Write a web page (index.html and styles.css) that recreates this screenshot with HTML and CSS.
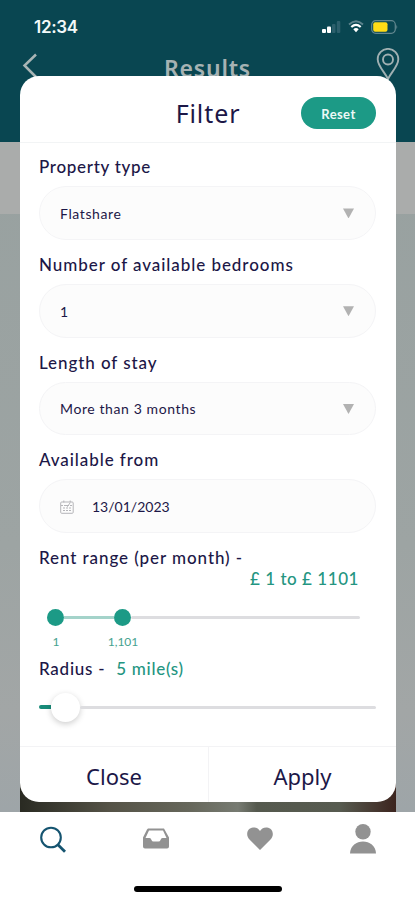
FILE: index.html
```html
<!DOCTYPE html>
<html lang="en">
<head>
<meta charset="utf-8">
<title>Filter</title>
<link rel="stylesheet" href="styles.css">
</head>
<body>
<div class="phone">
  <header class="top">
    <div class="status">
      <span class="time">12:34</span>
      <div class="status-icons">
        <svg width="19" height="14" viewBox="0 0 19 14"><rect x="0" y="9" width="4" height="4" rx="1" fill="#fff"/><rect x="5" y="6.500" width="4" height="6.500" rx="1" fill="#fff"/><rect x="10" y="4" width="3.500" height="9" rx="1" fill="#2c5f6c"/><rect x="14.800" y="1" width="3.500" height="12" rx="1" fill="#2c5f6c"/></svg>
        <svg width="16" height="14" viewBox="0 0 16 14" fill="none"><path d="M1 4.500Q8-2 15 4.500" stroke="#5d838d" stroke-width="1.800"/><path d="M3.300 7Q8 2.800 12.700 7" stroke="#fff" stroke-width="2.200"/><path d="M5.300 9.200Q8 7 10.700 9.200L8 12.300Z" fill="#fff"/></svg>
        <svg width="27" height="14" viewBox="0 0 27 14"><rect x="0.700" y="0.700" width="23.600" height="12.600" rx="4" fill="none" stroke="#638890" stroke-width="1.200"/><rect x="2.200" y="2.200" width="14.300" height="9.600" rx="2" fill="#ffdc16"/><path d="M25.500 4.500q1.500 2.500 0 5z" fill="#7b999f"/></svg>
      </div>
    </div>
    <div class="nav">
      <svg class="back" width="16" height="26" viewBox="0 0 16 26"><path d="M14 1.500L2.500 12.500L14 24" fill="none" stroke="#a9b5b5" stroke-width="2.500"/></svg>
      <span class="nav-title">Results</span>
      <svg class="pin" width="24" height="32" viewBox="0 0 24 32" fill="none" stroke="#a0b0b2" stroke-width="1.900"><path d="M12 31C9 24.500 1.700 18 1.700 11.200a10.300 10.300 0 0 1 20.600 0C22.300 18 15 24.500 12 31Z"/><circle cx="12" cy="11.500" r="5"/></svg>
    </div>
  </header>
  <main class="results">
    <div class="results-bar"></div>
    <div class="listing"></div>
    <div class="photo"></div>
  </main>
  <nav class="tabs">
    <svg width="28" height="28" viewBox="0 0 28 28" fill="none" stroke="#155470"><circle cx="12" cy="11.500" r="9.800" stroke-width="2.100"/><path d="M18.700 18.500L26 25.800" stroke-width="2.800"/></svg>
    <svg width="28" height="28" viewBox="0 0 28 28"><path d="M6 2.500H22L27 11.500V20.500Q27 22.500 25 22.500H3Q1 22.500 1 20.500V11.500L5 3.500ZM7 4.500L3.500 12H7.500Q9 12 9.500 14Q10 15.500 11.500 15.500H16.500Q18 15.500 18.500 14Q19 12 20.500 12H24.500L21 4.500Z" fill="#929292" fill-rule="evenodd"/></svg>
    <svg width="28" height="28" viewBox="0 0 28 28"><path d="M14 24L3.500 13.500C-1 8.500 1.500 2 7 1.500C10.500 1.200 12.800 3 14 5C15.200 3 17.500 1.200 21 1.500C26.500 2 29 8.500 24.500 13.500Z" fill="#929292"/></svg>
    <svg width="28" height="32" viewBox="0 0 28 32"><circle cx="14" cy="7.800" r="7.700" fill="#929292"/><path d="M1 29.500C1.500 13.500 26.500 13.500 27 29.500Z" fill="#929292"/></svg>
  </nav>
  <div class="home"><i></i></div>

  <section class="modal">
    <header class="modal-head">
      <h1>Filter</h1>
      <button class="reset">Reset</button>
    </header>
    <div class="form">
      <label class="label l1">Property type</label>
      <div class="field"><span class="v1">Flatshare</span><i class="caret"></i></div>
      <label class="label l2">Number of available bedrooms</label>
      <div class="field"><span>1</span><i class="caret"></i></div>
      <label class="label l3">Length of stay</label>
      <div class="field"><span class="v3">More than 3 months</span><i class="caret"></i></div>
      <label class="label l4">Available from</label>
      <div class="field"><svg class="cal" width="14" height="14" viewBox="0 0 14 14" fill="none" stroke="#b5b5b9"><rect x="0.700" y="2" width="12.500" height="11.300" rx="1"/><path d="M1 5.500H13M3.800 0.500V3.500M10.200 0.500V3.500M3 8H11M3 10.500H11" stroke-dasharray="2 1"/><path d="M6 5L7.500 6.500L10 3" /></svg><span class="v4">13/01/2023</span></div>
      <label class="label l5">Rent range (per month) -</label>
      <div class="amount">£ 1 to £ 1101</div>
      <div class="range"><i class="dot"></i><i class="line on"></i><i class="dot"></i><i class="line"></i></div>
      <div class="ticks"><span>1</span><span>1,101</span></div>
      <div class="radius"><span class="label l6">Radius -</span><span class="miles">5 mile(s)</span></div>
      <div class="slider"><i class="fill"></i><i class="knob"></i><i class="line"></i></div>
    </div>
    <footer class="actions"><button>Close</button><button class="apply">Apply</button></footer>
  </section>
</div>
</body>
</html>
```
FILE: styles.css
```css
* { box-sizing: border-box; }
body { margin: 0; font-family: Lato, "Open Sans", sans-serif; color: #1c1747; }
button { border: 0; margin: 0; padding: 0; background: none; font: inherit; color: inherit; }
svg { display: block; flex: none; }
.phone { position: relative; width: 415px; height: 900px; overflow: hidden; display: flex; flex-direction: column; background: #fff; }
.top { height: 142px; background: #094651; flex: none; }
.status { height: 48px; padding: 6px 17px 0 34px; display: flex; align-items: center; justify-content: space-between; }
.time { font: 600 17px/20px Inter, sans-serif; color: #f3f9f9; letter-spacing: -0.3px; }
.status-icons { display: flex; align-items: center; gap: 7px; }
.nav { display: grid; grid-template-columns: 70px 1fr 70px; height: 36px; }
.back { margin: 5px 0 0 22px; }
.nav-title { text-align: center; font: 600 23px/40px "Noto Sans", sans-serif; color: #a6b2b3; letter-spacing: 0.8px; }
.pin { margin-left: 31px; }
.results { height: 670px; background: linear-gradient(#98a1a0, #9da4a3 60%, #a2a6a6 85%, #9ea5a8); display: flex; flex-direction: column; }
.results-bar { height: 72px; background: #aaacab; }
.listing { flex: 1; }
.photo { height: 64px; margin: 0 19px 0 20px; background: linear-gradient(90deg, #292a22, #555347 24%, #66675b 45%, #777b72 58%, #55594e 63%, #575b50 85%, #3c241e); }
.tabs { height: 56px; padding: 0 38px 0 39px; display: flex; justify-content: space-between; align-items: center; }
.home { flex: 1; display: flex; justify-content: center; padding-top: 18px; }
.home i { width: 148px; height: 6px; border-radius: 3px; background: #000; }
.modal { position: absolute; left: 20px; top: 76px; width: 376px; height: 726px; background: #fff; border-radius: 19px; display: flex; flex-direction: column; overflow: hidden; }
.modal-head { height: 67px; flex: none; border-bottom: 1px solid #f2f4f5; display: grid; grid-template-columns: 1fr 75px; align-items: center; padding: 7px 21px 0 95px; }
.modal-head h1 { margin: 0; width: 186px; text-align: center; font: 400 25px/32px "Noto Sans", sans-serif; letter-spacing: 0.9px; }
.reset { height: 32px; border-radius: 16px; background: #1c9a86; color: #edf9f7; font-weight: 700; font-size: 13px; letter-spacing: 0.4px; padding-top: 2px; }
.form { flex: 1; padding: 12px 20px 0 19px; display: flex; flex-direction: column; }
.label { font-weight: 500; font-size: 17px; line-height: 24px; height: 24px; letter-spacing: 0.8px; white-space: nowrap; }
.l1 { letter-spacing: 0.7px; }
.l2 { letter-spacing: 0.94px; }
.l3, .l4, .l5 { letter-spacing: 0.92px; }
.l6 { letter-spacing: 0.75px; }
.field { height: 53.800px; margin: 7px 0 13px; flex: none; border: 1px solid #f4f4f6; border-radius: 27px; background: #fcfcfc; display: flex; align-items: center; padding: 3px 20px 2px; font-size: 14px; letter-spacing: 0.6px; }
.v4 { letter-spacing: 0; }
.caret { margin: 0 1px 0 auto; width: 11px; height: 10px; background: #b2b2b2; clip-path: polygon(0 0, 100% 0, 50% 100%); }
.cal { margin-right: 18px; }
.amount { align-self: flex-end; margin: -3px 17px 0 0; font-weight: 500; font-size: 17px; line-height: 24px; letter-spacing: 0.55px; color: #249581; }
.range { display: flex; align-items: center; height: 18px; margin: 17px 16px 0 8px; }
.dot { width: 17px; height: 17px; border-radius: 50%; background: #1c9a86; flex: none; }
.line { flex: 1; height: 3px; background: #dddde0; border-radius: 2px; }
.line.on { flex: none; width: 50px; background: #a4d3ca; border-radius: 0; }
.ticks { display: grid; grid-template-columns: 34px 100px; text-align: center; font-size: 12px; line-height: 16px; color: #46a28f; letter-spacing: 0; margin-top: 8px; }
.radius { display: flex; gap: 11px; height: 24px; margin-top: 7px; }
.miles { font-weight: 500; font-size: 17px; line-height: 24px; letter-spacing: 0.7px; color: #249581; }
.slider { display: flex; align-items: center; height: 30px; margin-top: 11px; }
.fill { width: 12px; height: 4px; border-radius: 2px 0 0 2px; background: #188b79; }
.knob { width: 29px; height: 29px; border-radius: 50%; background: #fff; box-shadow: 0 2px 6px rgba(0,0,0,.2); }
.actions { height: 56px; flex: none; display: grid; grid-template-columns: 188px 1fr; border-top: 1px solid #f3f3f5; font: 400 22px "Noto Sans", sans-serif; letter-spacing: 1.1px; }
.actions .apply { border-left: 1px solid #f3f3f5; }
.actions button { padding-top: 3px; }
```
